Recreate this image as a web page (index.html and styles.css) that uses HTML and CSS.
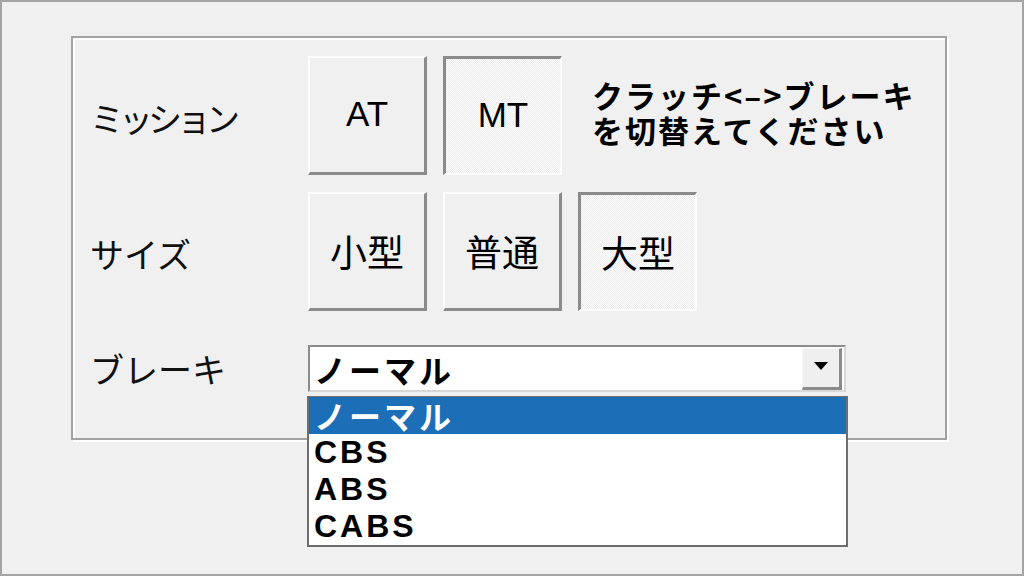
FILE: index.html
```html
<!DOCTYPE html>
<html lang="ja">
<head>
<meta charset="utf-8">
<title>設定</title>
<link rel="stylesheet" href="styles.css">
</head>
<body>
<div class="screen">
  <div class="group">
    <div class="label label-tight">ミッション</div>
    <div class="controls">
      <div class="btn">AT</div>
      <div class="btn pressed">MT</div>
      <div class="note">クラッチ&lt;&#8211;&gt;ブレーキ<br>を切替えてください</div>
    </div>

    <div class="label">サイズ</div>
    <div class="controls">
      <div class="btn btn-kanji">小型</div>
      <div class="btn btn-kanji">普通</div>
      <div class="btn btn-kanji pressed">大型</div>
    </div>

    <div class="label label-last">ブレーキ</div>
    <div class="combo-cell">
      <div class="combo">
        <span class="combo-value">ノーマル</span>
        <span class="combo-arrow"><span class="tri"></span></span>
        <ul class="list">
          <li class="selected">ノーマル</li>
          <li>CBS</li>
          <li>ABS</li>
          <li>CABS</li>
        </ul>
      </div>
    </div>
  </div>
</div>
</body>
</html>
```

FILE: styles.css
```css
html, body {
  margin: 0;
  padding: 0;
  background: #f0f0f0;
}

.screen {
  width: 1024px;
  height: 576px;
  box-sizing: border-box;
  border: 2px solid #a4a4a4;
  background: #f0f0f0;
  padding: 34px 0 0 69px;
  font-family: "Liberation Sans", "Noto Sans CJK JP", sans-serif;
  color: #000;
}

.group {
  width: 876px;
  box-sizing: border-box;
  border: 2px solid #a2a2a2;
  box-shadow: inset 2px 2px 0 #ffffff, 2px 2px 0 #ffffff;
  padding: 18px 0 46px 17px;
  display: grid;
  grid-template-columns: 218px 1fr;
  grid-template-rows: 119px 119px 64px;
  row-gap: 17px;
}

.label {
  align-self: center;
  font-family: "Noto Sans CJK JP", sans-serif;
  font-size: 34px;
  font-weight: 400;
  line-height: 40px;
  margin-top: 4px;
  color: #111;
}

.label-tight {
  letter-spacing: -5px;
}

.label-last {
  align-self: end;
  margin: 0 0 3px 0;
}

.controls {
  display: flex;
  align-items: stretch;
  gap: 16px;
}

.btn {
  width: 119px;
  height: 119px;
  box-sizing: border-box;
  border-style: solid;
  border-width: 2px 3px 3px 2px;
  border-color: #fdfdfd #8a8a8a #8a8a8a #fdfdfd;
  background: #f0f0f0;
  display: flex;
  align-items: center;
  justify-content: center;
  font-family: "Liberation Sans", "Noto Sans CJK JP", sans-serif;
  font-size: 35px;
  line-height: 1;
  padding-bottom: 3px;
}

.btn-kanji {
  font-family: "Noto Sans CJK JP", sans-serif;
  font-size: 37px;
  padding-bottom: 0;
}

.btn.pressed {
  border-width: 3px 2px 2px 3px;
  border-color: #8a8a8a #fdfdfd #fdfdfd #8a8a8a;
  background: repeating-conic-gradient(#ffffff 0 25%, #ebebeb 0 50%) 0 0 / 2px 2px;
}

.note {
  align-self: center;
  margin-left: 14px;
  font-family: "Noto Sans CJK JP", sans-serif;
  font-weight: 700;
  font-size: 31px;
  line-height: 35px;
  letter-spacing: 2px;
  margin-top: -8px;
}

.combo-cell {
  align-self: end;
}

.combo {
  position: relative;
  width: 538px;
  height: 47px;
  box-sizing: border-box;
  border-style: solid;
  border-width: 2px;
  border-color: #8c8c8c #d8d8d8 #d8d8d8 #8c8c8c;
  background: #ffffff;
  display: flex;
  align-items: center;
  justify-content: space-between;
}

.combo-value {
  padding-left: 4px;
  font-family: "Noto Sans CJK JP", sans-serif;
  font-weight: 700;
  font-size: 32px;
  letter-spacing: 3px;
  line-height: 40px;
}

.combo-arrow {
  align-self: stretch;
  width: 40px;
  margin: 1px 2px 0 0;
  box-sizing: border-box;
  border-style: solid;
  border-width: 1px 3px 3px 1px;
  border-color: #f8f8f8 #8a8a8a #8a8a8a #f8f8f8;
  background: #efefef;
  display: flex;
  align-items: center;
  justify-content: center;
}

.tri {
  width: 0;
  height: 0;
  border-left: 7px solid transparent;
  border-right: 7px solid transparent;
  border-top: 8px solid #000;
  margin-top: -4px;
}

.list {
  position: absolute;
  left: -3px;
  top: 49px;
  width: 541px;
  box-sizing: border-box;
  margin: 0;
  padding: 0;
  list-style: none;
  background: #ffffff;
  border: 2px solid #6e6e6e;
  border-top-width: 1px;
}

.list li {
  height: 37px;
  line-height: 37px;
  padding-left: 5px;
  font-family: "Liberation Sans", "Noto Sans CJK JP", sans-serif;
  font-weight: 700;
  font-size: 32px;
  letter-spacing: 3px;
  white-space: nowrap;
}

.list li.selected {
  background: #1c6eb7;
  color: #ffffff;
  font-family: "Noto Sans CJK JP", sans-serif;
}
```
